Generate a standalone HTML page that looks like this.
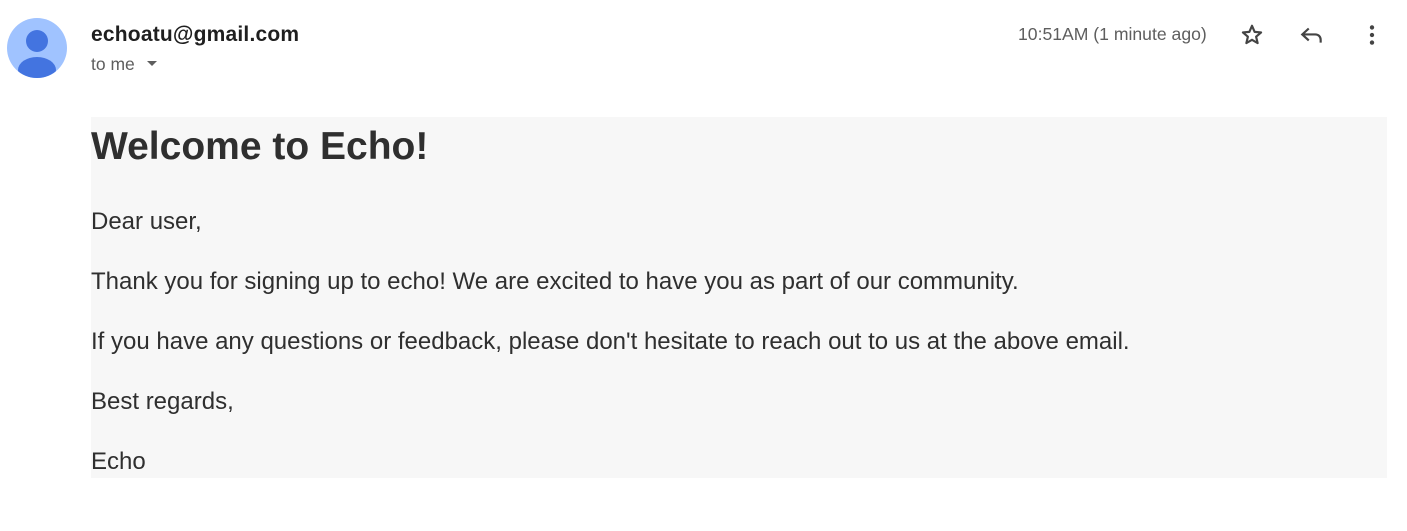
<!DOCTYPE html>
<html><head><style>
body{margin:0;width:1407px;height:531px;background:#fff;font-family:"Liberation Sans",Arial,sans-serif;position:relative;overflow:hidden}
.abs{position:absolute;white-space:nowrap}
</style></head><body>
<svg class="abs" style="left:7px;top:18px" width="60" height="60" viewBox="0 0 60 60">
<defs><clipPath id="c"><circle cx="30" cy="30" r="30"/></clipPath></defs>
<circle cx="30" cy="30" r="30" fill="#a0c3ff"/>
<g clip-path="url(#c)" fill="#4374e0"><circle cx="30" cy="23" r="11"/><ellipse cx="30" cy="52" rx="19" ry="13"/></g>
</svg>
<div class="abs" style="left:91px;top:23px;font-size:21px;font-weight:bold;color:#1f1f1f;letter-spacing:0.2px">echoatu@gmail.com</div>
<div class="abs" style="left:91px;top:54px;font-size:17.5px;color:#5e5e5e">to me</div>
<svg class="abs" style="left:146px;top:60px" width="12" height="8"><path d="M1 1h10L6 6z" fill="#5e5e5e"/></svg>
<div class="abs" style="left:1018px;top:24px;font-size:17.6px;color:#5e5e5e">10:51AM (1 minute ago)</div>
<svg class="abs" style="left:1239px;top:22px" width="26" height="26" viewBox="0 0 24 24"><path d="M12 3.5l2.4 5.6 6 .5-4.6 4 1.4 5.9L12 16.4 6.8 19.5l1.4-5.9-4.6-4 6-.5z" fill="none" stroke="#444" stroke-width="2" stroke-linejoin="round"/></svg>
<svg class="abs" style="left:1299px;top:22px" width="26" height="26" viewBox="0 0 24 24"><path d="M9 6L3 11.5 9 17M3.5 11.5H15c3 0 5 2 5 5V19" fill="none" stroke="#444" stroke-width="2"/></svg>
<svg class="abs" style="left:1359px;top:22px" width="26" height="26" viewBox="0 0 24 24"><circle cx="12" cy="5" r="2" fill="#444"/><circle cx="12" cy="12" r="2" fill="#444"/><circle cx="12" cy="19" r="2" fill="#444"/></svg>
<div class="abs" style="left:91px;top:117px;width:1296px;height:361px;background:#f7f7f7;color:#2f2f2f">
<div class="abs" style="left:0;top:8px;font-size:39px;font-weight:bold">Welcome to Echo!</div>
<div class="abs" style="left:0;top:91px;font-size:24px">Dear user,</div>
<div class="abs" style="left:0;top:151px;font-size:24px">Thank you for signing up to echo! We are excited to have you as part of our community.</div>
<div class="abs" style="left:0;top:211px;font-size:24px">If you have any questions or feedback, please don't hesitate to reach out to us at the above email.</div>
<div class="abs" style="left:0;top:271px;font-size:24px">Best regards,</div>
<div class="abs" style="left:0;top:331px;font-size:24px">Echo</div>
</div>
</body></html>
